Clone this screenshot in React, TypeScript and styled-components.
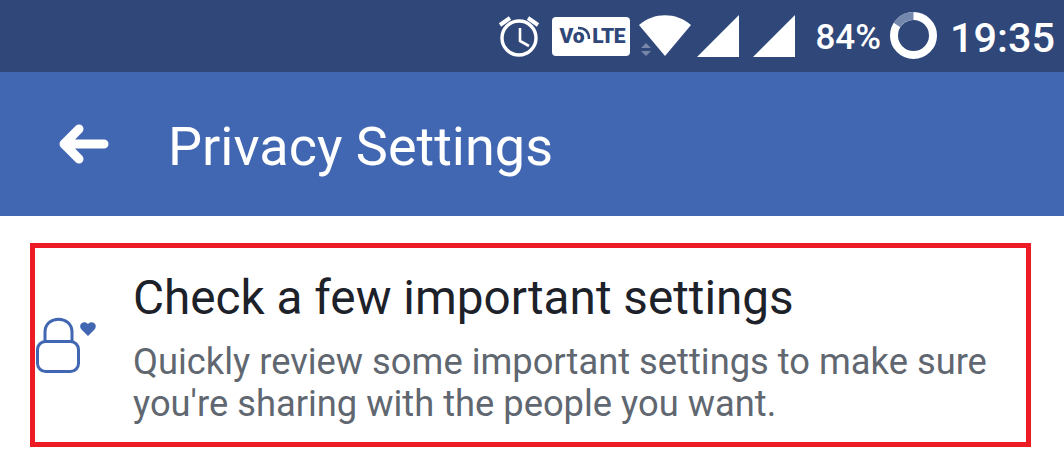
import { FC } from 'react';
import styled, { createGlobalStyle } from 'styled-components';

const GlobalStyle = createGlobalStyle`
   html, body {
      margin: 0;
      padding: 0;
      background: #fff;
      font-family: Roboto, "Liberation Sans", sans-serif;
   }
`;

const Page = styled.div`
   width: 1064px;
   height: 460px;
   overflow: hidden;
   background: #fff;
`;

const StatusBar = styled.div`
   height: 72px;
   background: #30477a;
   color: #fff;
   display: flex;
   align-items: center;
   justify-content: flex-end;
   padding-right: 9px;
`;

const StatusIcon = styled.svg<{ $gap: number }>`
   display: block;
   flex: none;
   margin-right: ${(props) => props.$gap}px;
`;

const BatteryRing = styled(StatusIcon)`
   margin-bottom: 2px;
`;

const VolteBadge = styled.div`
   position: relative;
   width: 78px;
   height: 39px;
   margin-right: 9px;
   background: #fff;
   border-radius: 4px;
   color: #30477a;
   font-size: 21px;
   font-weight: 900;
   letter-spacing: -0.5px;
   line-height: 39px;
   display: flex;
   padding-left: 7px;
   box-sizing: border-box;
`;

const VolteO = styled.span`
   margin-right: 8px;
`;

const VolteArcs = styled.svg`
   position: absolute;
   left: 24px;
   top: 9px;
`;

const StatusText = styled.span<{ $size: number; $gap: number }>`
   font-size: ${(props) => props.$size}px;
   font-weight: 500;
   line-height: 64px;
   padding-top: 4px;
   margin-right: ${(props) => props.$gap}px;
`;

const Header = styled.header`
   height: 144px;
   background: #4267b2;
   color: #fff;
   display: flex;
   align-items: center;
   padding-left: 59px;
`;

const BackIcon = styled.svg`
   display: block;
   flex: none;
   margin-right: 59px;
`;

const HeaderTitle = styled.h1`
   margin: 6px 0 0;
   font-size: 54px;
   font-weight: 400;
   line-height: 60px;
`;

const Highlight = styled.section`
   box-sizing: border-box;
   width: 1001px;
   height: 204px;
   margin: 27px 0 0 30px;
   border: 5px solid #ed1c24;
   display: flex;
   align-items: center;
   padding-left: 1px;
`;

const LockIcon = styled.svg`
   display: block;
   flex: none;
   margin-right: 35px;
`;

const Copy = styled.div`
   min-width: 0;
   padding-top: 6px;
`;

const CopyTitle = styled.h2`
   margin: 0 0 16px;
   font-size: 47.7px;
   font-weight: 400;
   line-height: 54px;
   color: #1d2129;
   white-space: nowrap;
`;

const CopyText = styled.p`
   margin: 0;
   font-size: 36.3px;
   line-height: 42px;
   color: #606770;
   white-space: nowrap;
`;

const App: FC = (): JSX.Element => {
   return (
      <Page>
         <GlobalStyle />
         <StatusBar>
            <StatusIcon $gap={11} width="44" height="44" viewBox="0 0 44 44" fill="none" stroke="#fff" strokeWidth="3.4">
               <circle cx="22" cy="24" r="17" />
               <path d="M23 14 V27 L32 32" strokeWidth="2.6" />
               <path d="M3 11 L13 4 M31 4 L41 11" strokeWidth="4" />
            </StatusIcon>
            <VolteBadge>
               V<VolteO>o</VolteO>LTE
               <VolteArcs width="15" height="14" viewBox="0 0 15 14" fill="none" stroke="#30477a" strokeWidth="2.4">
                  <path d="M1 7 C5 7 7 9 7 13" />
                  <path d="M2 2 C9 2 13 6 13 13" />
               </VolteArcs>
            </VolteBadge>
            <StatusIcon $gap={6} width="52" height="42" viewBox="0 0 52 42">
               <path d="M0 10 C15 -3 37 -3 52 10 L26 41 Z" fill="#fff" />
               <path d="M2 33 L7 28 L12 33 Z M2 36 L12 36 L7 41 Z" fill="#fff" opacity="0.35" />
            </StatusIcon>
            <StatusIcon $gap={14} width="42" height="42" viewBox="0 0 42 42">
               <path d="M42 0 V42 H0 Z" fill="#fff" />
            </StatusIcon>
            <StatusIcon $gap={20} width="42" height="42" viewBox="0 0 42 42">
               <path d="M42 0 V42 H0 Z" fill="#fff" />
            </StatusIcon>
            <StatusText $size={35} $gap={9}>84%</StatusText>
            <BatteryRing $gap={13} width="47" height="47" viewBox="0 0 47 47" fill="none" strokeWidth="8">
               <circle cx="23.5" cy="23.5" r="19.5" stroke="#fff" />
               <path d="M23.5 4 A19.5 19.5 0 0 0 7 13" stroke="#7487ad" />
            </BatteryRing>
            <StatusText $size={41.4} $gap={0}>19:35</StatusText>
         </StatusBar>
         <Header>
            <BackIcon width="50" height="40" viewBox="0 0 50 40" fill="none" stroke="#fff" strokeWidth="9" strokeLinecap="round" strokeLinejoin="round">
               <path d="M45 20 H6 M20 5 L5 20 L20 35" />
            </BackIcon>
            <HeaderTitle>Privacy Settings</HeaderTitle>
         </Header>
         <Highlight>
            <LockIcon width="62" height="58" viewBox="0 0 62 58" fill="none" stroke="#4267b2" strokeWidth="3">
               <rect x="1.5" y="25.5" width="41" height="30" rx="8" />
               <path d="M9 25 V16 C9 -1 36 -1 36 16 V25" />
               <path d="M52 20 L45 13 C42 8 48 4 52 8 C56 4 62 8 59 13 Z" fill="#4267b2" stroke="none" />
            </LockIcon>
            <Copy>
               <CopyTitle>Check a few important settings</CopyTitle>
               <CopyText>
                  Quickly review some important settings to make sure
                  <br />
                  you're sharing with the people you want.
               </CopyText>
            </Copy>
         </Highlight>
      </Page>
   );
};

export default App;
